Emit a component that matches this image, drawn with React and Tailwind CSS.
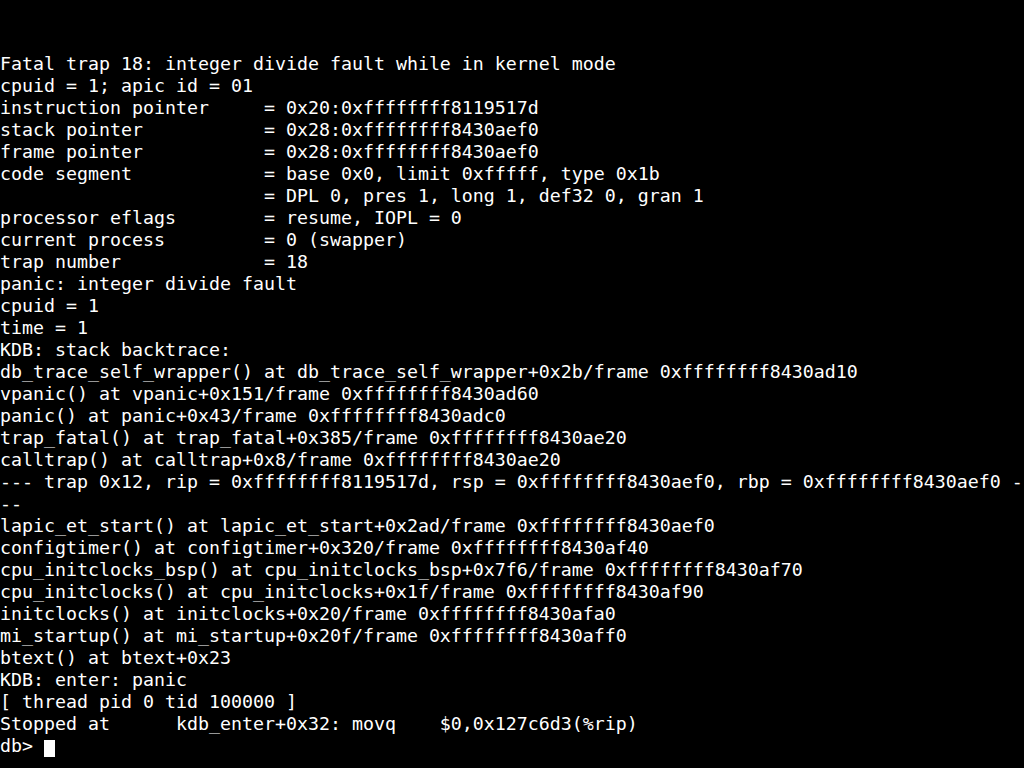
import React from "react";

const lines = [
  "Fatal trap 18: integer divide fault while in kernel mode",
  "cpuid = 1; apic id = 01",
  "instruction pointer     = 0x20:0xffffffff8119517d",
  "stack pointer           = 0x28:0xffffffff8430aef0",
  "frame pointer           = 0x28:0xffffffff8430aef0",
  "code segment            = base 0x0, limit 0xfffff, type 0x1b",
  "                        = DPL 0, pres 1, long 1, def32 0, gran 1",
  "processor eflags        = resume, IOPL = 0",
  "current process         = 0 (swapper)",
  "trap number             = 18",
  "panic: integer divide fault",
  "cpuid = 1",
  "time = 1",
  "KDB: stack backtrace:",
  "db_trace_self_wrapper() at db_trace_self_wrapper+0x2b/frame 0xffffffff8430ad10",
  "vpanic() at vpanic+0x151/frame 0xffffffff8430ad60",
  "panic() at panic+0x43/frame 0xffffffff8430adc0",
  "trap_fatal() at trap_fatal+0x385/frame 0xffffffff8430ae20",
  "calltrap() at calltrap+0x8/frame 0xffffffff8430ae20",
  "--- trap 0x12, rip = 0xffffffff8119517d, rsp = 0xffffffff8430aef0, rbp = 0xffffffff8430aef0 -",
  "--",
  "lapic_et_start() at lapic_et_start+0x2ad/frame 0xffffffff8430aef0",
  "configtimer() at configtimer+0x320/frame 0xffffffff8430af40",
  "cpu_initclocks_bsp() at cpu_initclocks_bsp+0x7f6/frame 0xffffffff8430af70",
  "cpu_initclocks() at cpu_initclocks+0x1f/frame 0xffffffff8430af90",
  "initclocks() at initclocks+0x20/frame 0xffffffff8430afa0",
  "mi_startup() at mi_startup+0x20f/frame 0xffffffff8430aff0",
  "btext() at btext+0x23",
  "KDB: enter: panic",
  "[ thread pid 0 tid 100000 ]",
  "Stopped at      kdb_enter+0x32: movq    $0,0x127c6d3(%rip)",
];

const App = () => {
  return (
    <div className="w-[1024px] h-[768px] overflow-hidden bg-black pt-[53px] text-white font-['DejaVu_Sans_Mono',monospace] text-[18.27px] leading-[22px]">
      {lines.map((line, i) => (
        <div key={i} className="whitespace-pre h-[22px]">
          {line}
        </div>
      ))}
      {/* prompt with block cursor */}
      <div className="whitespace-pre h-[22px] flex items-start">
        <span>db&gt; </span>
        <span className="inline-block w-[11px] h-[17px] mt-[5px] bg-white" />
      </div>
    </div>
  );
};

export default App;
